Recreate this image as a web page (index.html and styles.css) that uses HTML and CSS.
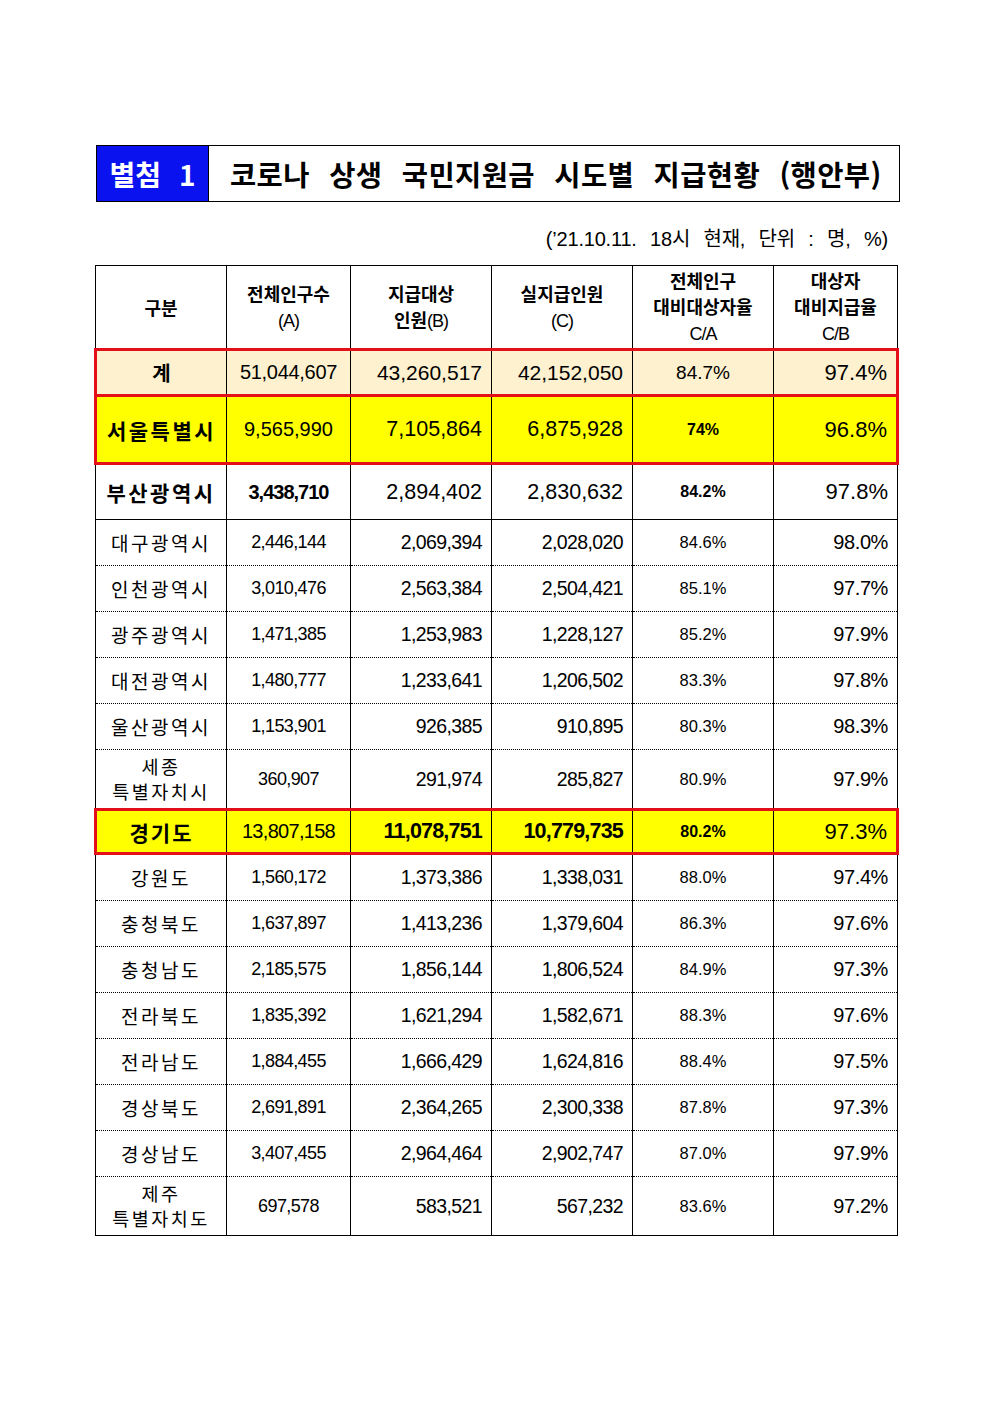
FILE: index.html
```html
<!DOCTYPE html>
<html lang="ko">
<head>
<meta charset="utf-8">
<link rel="stylesheet" href="styles.css">
</head>
<body>
<div class="page">
  <div class="titlebox">
    <div class="tag">별첨 1</div>
    <div class="title">코로나 상생 국민지원금 시도별 지급현황 (행안부)</div>
  </div>
  <div class="note">(’21.10.11. 18시 현재, 단위 : 명, %)</div>
  <table class="grid">
    <colgroup>
      <col class="c1"><col class="c2"><col class="c3"><col class="c4"><col class="c5"><col class="c6">
    </colgroup>
    <tr class="head">
      <th>구분</th>
      <th>전체인구수<br><span class="lat">(A)</span></th>
      <th>지급대상<br>인원<span class="lat">(B)</span></th>
      <th>실지급인원<br><span class="lat">(C)</span></th>
      <th>전체인구<br>대비대상자율<br><span class="lat">C/A</span></th>
      <th>대상자<br>대비지급율<br><span class="lat">C/B</span></th>
    </tr>
    <tr class="total red">
      <td class="name">계</td>
      <td class="a">51,044,607</td>
      <td class="num">43,260,517</td>
      <td class="num">42,152,050</td>
      <td class="pa">84.7%</td>
      <td class="pb">97.4%</td>
    </tr>
    <tr class="seoul red yellow">
      <td class="name">서울특별시</td>
      <td class="a">9,565,990</td>
      <td class="num">7,105,864</td>
      <td class="num">6,875,928</td>
      <td class="pa">74%</td>
      <td class="pb">96.8%</td>
    </tr>
    <tr class="busan">
      <td class="name">부산광역시</td>
      <td class="a">3,438,710</td>
      <td class="num">2,894,402</td>
      <td class="num">2,830,632</td>
      <td class="pa">84.2%</td>
      <td class="pb">97.8%</td>
    </tr>
    <tr class="row">
      <td class="name">대구광역시</td><td class="a">2,446,144</td><td class="num">2,069,394</td><td class="num">2,028,020</td><td class="pa">84.6%</td><td class="pb">98.0%</td>
    </tr>
    <tr class="row">
      <td class="name">인천광역시</td><td class="a">3,010,476</td><td class="num">2,563,384</td><td class="num">2,504,421</td><td class="pa">85.1%</td><td class="pb">97.7%</td>
    </tr>
    <tr class="row">
      <td class="name">광주광역시</td><td class="a">1,471,385</td><td class="num">1,253,983</td><td class="num">1,228,127</td><td class="pa">85.2%</td><td class="pb">97.9%</td>
    </tr>
    <tr class="row">
      <td class="name">대전광역시</td><td class="a">1,480,777</td><td class="num">1,233,641</td><td class="num">1,206,502</td><td class="pa">83.3%</td><td class="pb">97.8%</td>
    </tr>
    <tr class="row">
      <td class="name">울산광역시</td><td class="a">1,153,901</td><td class="num">926,385</td><td class="num">910,895</td><td class="pa">80.3%</td><td class="pb">98.3%</td>
    </tr>
    <tr class="row tall">
      <td class="name"><span class="ln">세종</span><span class="ln">특별자치시</span></td><td class="a">360,907</td><td class="num">291,974</td><td class="num">285,827</td><td class="pa">80.9%</td><td class="pb">97.9%</td>
    </tr>
    <tr class="gg red yellow">
      <td class="name">경기도</td>
      <td class="a">13,807,158</td>
      <td class="num">11,078,751</td>
      <td class="num">10,779,735</td>
      <td class="pa">80.2%</td>
      <td class="pb">97.3%</td>
    </tr>
    <tr class="row">
      <td class="name">강원도</td><td class="a">1,560,172</td><td class="num">1,373,386</td><td class="num">1,338,031</td><td class="pa">88.0%</td><td class="pb">97.4%</td>
    </tr>
    <tr class="row">
      <td class="name">충청북도</td><td class="a">1,637,897</td><td class="num">1,413,236</td><td class="num">1,379,604</td><td class="pa">86.3%</td><td class="pb">97.6%</td>
    </tr>
    <tr class="row">
      <td class="name">충청남도</td><td class="a">2,185,575</td><td class="num">1,856,144</td><td class="num">1,806,524</td><td class="pa">84.9%</td><td class="pb">97.3%</td>
    </tr>
    <tr class="row">
      <td class="name">전라북도</td><td class="a">1,835,392</td><td class="num">1,621,294</td><td class="num">1,582,671</td><td class="pa">88.3%</td><td class="pb">97.6%</td>
    </tr>
    <tr class="row">
      <td class="name">전라남도</td><td class="a">1,884,455</td><td class="num">1,666,429</td><td class="num">1,624,816</td><td class="pa">88.4%</td><td class="pb">97.5%</td>
    </tr>
    <tr class="row">
      <td class="name">경상북도</td><td class="a">2,691,891</td><td class="num">2,364,265</td><td class="num">2,300,338</td><td class="pa">87.8%</td><td class="pb">97.3%</td>
    </tr>
    <tr class="row">
      <td class="name">경상남도</td><td class="a">3,407,455</td><td class="num">2,964,464</td><td class="num">2,902,747</td><td class="pa">87.0%</td><td class="pb">97.9%</td>
    </tr>
    <tr class="row tall last">
      <td class="name"><span class="ln">제주</span><span class="ln">특별자치도</span></td><td class="a">697,578</td><td class="num">583,521</td><td class="num">567,232</td><td class="pa">83.6%</td><td class="pb">97.2%</td>
    </tr>
  </table>
</div>
</body>
</html>
```

FILE: styles.css
```css
html, body {
  margin: 0;
  padding: 0;
  background: #ffffff;
}

body {
  font-family: "Liberation Sans", "Noto Sans CJK KR", sans-serif;
  color: #000;
}

.page {
  width: 992px;
  padding: 145px 0 0 95px;
  box-sizing: border-box;
}

.titlebox {
  width: 804px;
  height: 57px;
  margin-left: 1px;
  border: 1px solid #000;
  box-sizing: border-box;
  display: flex;
  align-items: stretch;
}

.tag {
  width: 111px;
  background: #0a12f0;
  color: #fff;
  font-family: "Noto Sans CJK KR", sans-serif;
  font-weight: 700;
  font-size: 28px;
  display: flex;
  align-items: center;
  justify-content: center;
  word-spacing: 10px;
  border-right: 1px solid #000;
}

.title {
  flex: 1;
  display: flex;
  align-items: center;
  padding-left: 21px;
  font-family: "Noto Sans CJK KR", sans-serif;
  font-weight: 700;
  font-size: 28.5px;
  word-spacing: 11px;
  letter-spacing: 0.4px;
}

.note {
  width: 802px;
  text-align: right;
  padding-right: 9px;
  box-sizing: border-box;
  margin-top: 21px;
  height: 42px;
  font-size: 20px;
  word-spacing: 8px;
  letter-spacing: -0.2px;
}

.grid {
  border-collapse: collapse;
  table-layout: fixed;
  width: 802px;
  margin-left: -1px;
  border: 1px solid #000;
}

.c1 { width: 131px; }
.c2 { width: 124px; }
.c3 { width: 141px; }
.c4 { width: 141px; }
.c5 { width: 141px; }
.c6 { width: 124px; }

.grid th,
.grid td {
  border-left: 1px solid #000;
  border-right: 1px solid #000;
  padding: 0;
  vertical-align: middle;
  white-space: nowrap;
}

.head th {
  height: 82px;
  font-weight: 700;
  font-size: 18px;
  line-height: 26px;
  font-family: "Noto Sans CJK KR", sans-serif;
  border-bottom: 1px solid #000;
  text-align: center;
}

.head .lat {
  font-family: "Liberation Sans", sans-serif;
  font-weight: 400;
  letter-spacing: -1px;
}

.name {
  text-align: center;
  font-family: "Noto Sans CJK KR", sans-serif;
}

.ln {
  display: block;
}

.a { text-align: center; }
.num { text-align: right; padding-right: 9px !important; }
.pa { text-align: center; }
.pb { text-align: right; padding-right: 9px !important; }

/* red highlighted rows */
.red td {
  border-top: 3px solid #e3101a;
  border-bottom: 3px solid #e3101a;
}
.red td:first-child { border-left: 3px solid #e3101a; }
.red td:last-child { border-right: 3px solid #e3101a; }

.yellow td { background: #ffff00; }

.total td {
  background: #fdf1cf;
  height: 43px;
}
.total .name { font-size: 20px; font-weight: 700; }
.total .a { font-size: 20px; letter-spacing: -0.3px; }
.total .num { font-size: 21px; }
.total .pa { font-size: 19px; }
.total .pb { font-size: 22px; }

.seoul td { height: 65px; }
.seoul .name { font-size: 21px; font-weight: 700; letter-spacing: 2.5px; }
.seoul .a { font-size: 20px; }
.seoul .num { font-size: 21.5px; }
.seoul .pa { font-size: 16px; font-weight: 700; }
.seoul .pb { font-size: 22px; }

.busan td {
  height: 54px;
  border-bottom: 1px solid #000;
}
.busan .name { font-size: 21px; font-weight: 700; letter-spacing: 2.5px; }
.busan .a { font-size: 20px; font-weight: 700; letter-spacing: -1px; }
.busan .num { font-size: 21.5px; }
.busan .pa { font-size: 16px; font-weight: 700; }
.busan .pb { font-size: 22px; }

.gg td { height: 41px; }
.gg .name { font-size: 21px; font-weight: 700; letter-spacing: 2px; }
.gg .a { font-size: 20px; letter-spacing: -0.7px; }
.gg .num { font-size: 21.5px; font-weight: 700; letter-spacing: -0.8px; }
.gg .pa { font-size: 16px; font-weight: 700; }
.gg .pb { font-size: 22px; }

.row td {
  height: 45px;
  border-bottom: 1px dotted #000;
}
.row.tall td { height: 58px; }
.row.last td { border-bottom: 1px solid #000; }
.row .name {
  font-size: 19px;
  letter-spacing: 2.5px;
  line-height: 24px;
}
.row.tall .name { font-size: 18.5px; line-height: 25px; }
.row .a { font-size: 18px; letter-spacing: -0.6px; }
.row .num { font-size: 19.5px; letter-spacing: -0.6px; }
.row .pa { font-size: 16.5px; }
.row .pb { font-size: 20px; letter-spacing: -0.4px; }
```
